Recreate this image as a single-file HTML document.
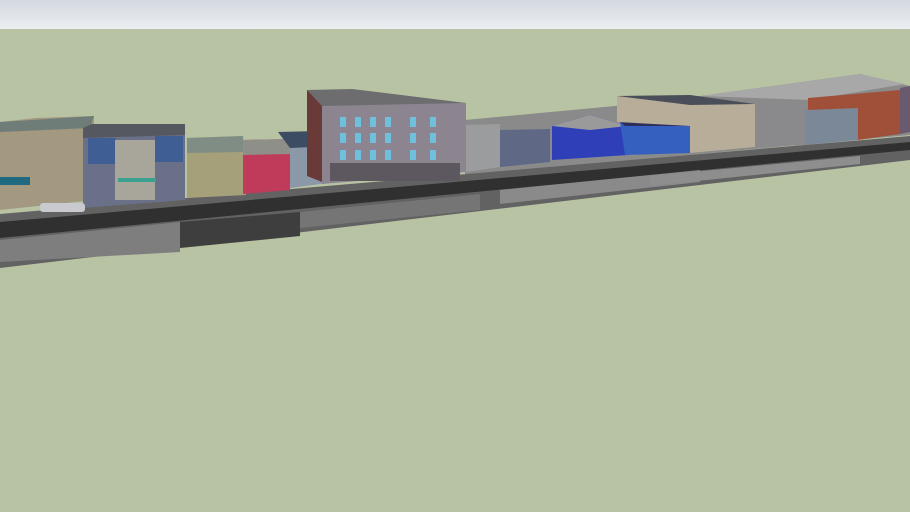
<!DOCTYPE html>
<html><head><meta charset="utf-8"><style>
html,body{margin:0;padding:0;width:910px;height:512px;overflow:hidden;background:#b7c3a2}
</style></head><body>
<svg width="910" height="512" viewBox="0 0 910 512" xmlns="http://www.w3.org/2000/svg">
<defs>
<linearGradient id="sky" x1="0" y1="0" x2="0" y2="1"><stop offset="0" stop-color="#d3d9e1"/><stop offset="1" stop-color="#eceef1"/></linearGradient>
</defs>
<rect width="910" height="512" fill="#b7c3a2"/>
<rect width="910" height="29" fill="url(#sky)"/>
<polygon points="465,120 615,106 700,96 860,74 910,86 910,135 465,175" fill="#8a8a8a"/>
<polygon points="700,96 860,74 905,84 810,100" fill="#a8a8a8"/>
<!-- road -->
<polygon points="0,214 910,136 910,160 0,268" fill="#626262"/>
<polygon points="0,222 910,142 910,150 0,238" fill="#303030"/>
<polygon points="0,240 180,222 180,252 0,262" fill="#7e7e7e"/>
<polygon points="300,212 480,194 480,210 300,228" fill="#757575"/>
<polygon points="500,190 700,170 700,182 500,204" fill="#8a8a8a"/>
<polygon points="650,176 860,156 860,164 650,186" fill="#8e8e8e"/>
<polygon points="180,222 300,212 300,236 180,248" fill="#3e3e3e"/>
<!-- left buildings -->
<polygon points="0,122 36,118 94,116 94,200 0,210" fill="#a39880"/>
<polygon points="0,122 94,116 90,128 0,132" fill="#6f7d78"/>
<rect x="0" y="177" width="30" height="8" fill="#1f6a80"/>
<polygon points="83,128 185,124 185,200 83,208" fill="#6a7088"/>
<polygon points="83,128 92,124 185,124 185,135 83,138" fill="#55595f"/>
<rect x="88" y="138" width="28" height="26" fill="#3e5e94"/>
<rect x="155" y="136" width="28" height="26" fill="#3e5e94"/>
<rect x="115" y="140" width="40" height="60" fill="#a8a59a"/>
<rect x="118" y="178" width="38" height="4" fill="#3aa090"/>
<polygon points="187,138 243,136 246,195 187,198" fill="#a5a07a"/>
<polygon points="187,138 243,136 244,152 187,153" fill="#7f8d85"/>
<polygon points="243,140 290,139 290,190 243,194" fill="#c03b5a"/>
<polygon points="243,140 290,139 290,154 243,155" fill="#8d8f88"/>
<polygon points="278,132 330,132 336,182 290,188 290,140" fill="#8b98a8"/>
<polygon points="278,132 320,131 334,146 290,148" fill="#3c4c62"/>
<rect x="40" y="203" width="45" height="9" fill="#c8cad0" rx="3"/>
<!-- big center building -->
<polygon points="307,90 322,103 322,182 307,176" fill="#6a3a38"/>
<polygon points="322,103 466,103 466,172 322,184" fill="#8c8590"/>
<polygon points="307,90 352,89 466,103 322,106" fill="#6d6d70"/>
<g fill="#6ec0dc">
<rect x="340" y="117" width="6" height="10"/><rect x="355" y="117" width="6" height="10"/><rect x="370" y="117" width="6" height="10"/><rect x="385" y="117" width="6" height="10"/><rect x="410" y="117" width="6" height="10"/><rect x="430" y="117" width="6" height="10"/>
<rect x="340" y="133" width="6" height="10"/><rect x="355" y="133" width="6" height="10"/><rect x="370" y="133" width="6" height="10"/><rect x="385" y="133" width="6" height="10"/><rect x="410" y="133" width="6" height="10"/><rect x="430" y="133" width="6" height="10"/>
<rect x="340" y="150" width="6" height="10"/><rect x="355" y="150" width="6" height="10"/><rect x="370" y="150" width="6" height="10"/><rect x="385" y="150" width="6" height="10"/><rect x="410" y="150" width="6" height="10"/><rect x="430" y="150" width="6" height="10"/>
</g>
<rect x="330" y="163" width="130" height="18" fill="#5d5860"/>
<polygon points="466,125 500,124 500,167 466,172" fill="#9a9c9e"/>
<polygon points="500,130 550,129 550,162 500,167" fill="#5f6884"/>
<polygon points="552,126 590,115 628,126 628,155 552,160" fill="#2f3fb8"/>
<polygon points="552,126 590,115 628,126 590,130" fill="#9a9a9a"/>
<polygon points="620,122 690,126 690,153 625,155" fill="#3560c0"/>
<polygon points="620,122 655,121 690,126 625,126" fill="#2d2d5c"/>
<polygon points="617,96 690,95 755,104 755,147 690,153 690,126 617,122" fill="#b7ad98"/>
<polygon points="617,96 690,95 755,104 690,105" fill="#4a4e58"/>
<polygon points="755,104 805,104 805,145 755,147" fill="#8a8a8c"/>
<polygon points="805,110 858,108 858,140 805,145" fill="#7a8898"/>
<polygon points="808,98 900,90 900,134 858,140 858,108 808,110" fill="#a05038"/>
<polygon points="900,88 910,86 910,132 900,134" fill="#6a5a70"/>
</svg>
</body></html>
